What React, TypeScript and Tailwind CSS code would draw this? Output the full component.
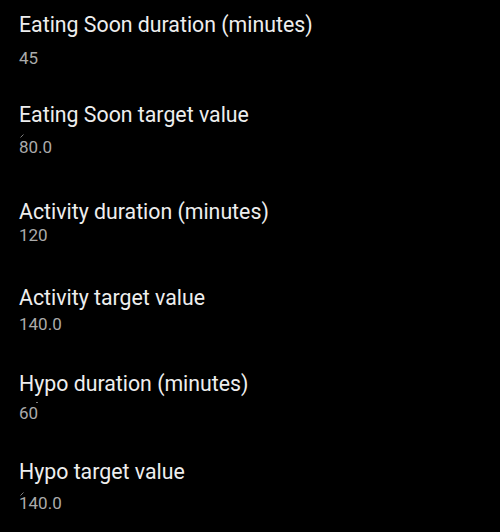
import React from "react";

function Tick({ className }: { className: string }) {
  return (
    <svg className={`absolute ${className}`} width="4" height="4" viewBox="0 0 4 4">
      <line x1="0.5" y1="3.5" x2="3.5" y2="0.5" stroke="#8a8a8a" strokeWidth="0.9" />
    </svg>
  );
}

export default function App() {
  const t = "text-[21.3px] leading-[24px] text-[#eeeeee] whitespace-nowrap";
  const v = "relative text-[17px] leading-[20px] text-[#ababab] whitespace-nowrap";
  return (
    <div
      className="w-[500px] h-[532px] bg-black overflow-hidden flex flex-col pl-[19px] pt-[13px]"
      style={{ fontFamily: "Roboto, 'Noto Sans', sans-serif" }}
    >
      <div className={t}>Eating Soon duration (minutes)</div>
      <div className={`${v} mt-[11px]`}>45</div>

      <div className={`${t} mt-[35px]`}>Eating Soon target value</div>
      <div className={`${v} mt-[10px]`}>
        80.0
        <Tick className="left-[1px] top-[-3px]" />
      </div>

      <div className={`${t} mt-[43px]`}>Activity duration (minutes)</div>
      <div className={`${v} mt-[1px]`}>120</div>

      <div className={`${t} mt-[41px]`}>Activity target value</div>
      <div className={`${v} mt-[4px]`}>140.0</div>

      <div className={`${t} mt-[38px]`}>Hypo duration (minutes)</div>
      <div className={`${v} mt-[7px]`}>
        60
        <span className="absolute left-[17px] top-[-1px] w-[2px] h-[1px] bg-[#7a7a7a]" />
      </div>

      <div className={`${t} mt-[37px]`}>Hypo target value</div>
      <div className={`${v} mt-[9px]`}>
        140.0
        <Tick className="left-[1px] top-[-1px]" />
      </div>
    </div>
  );
}
